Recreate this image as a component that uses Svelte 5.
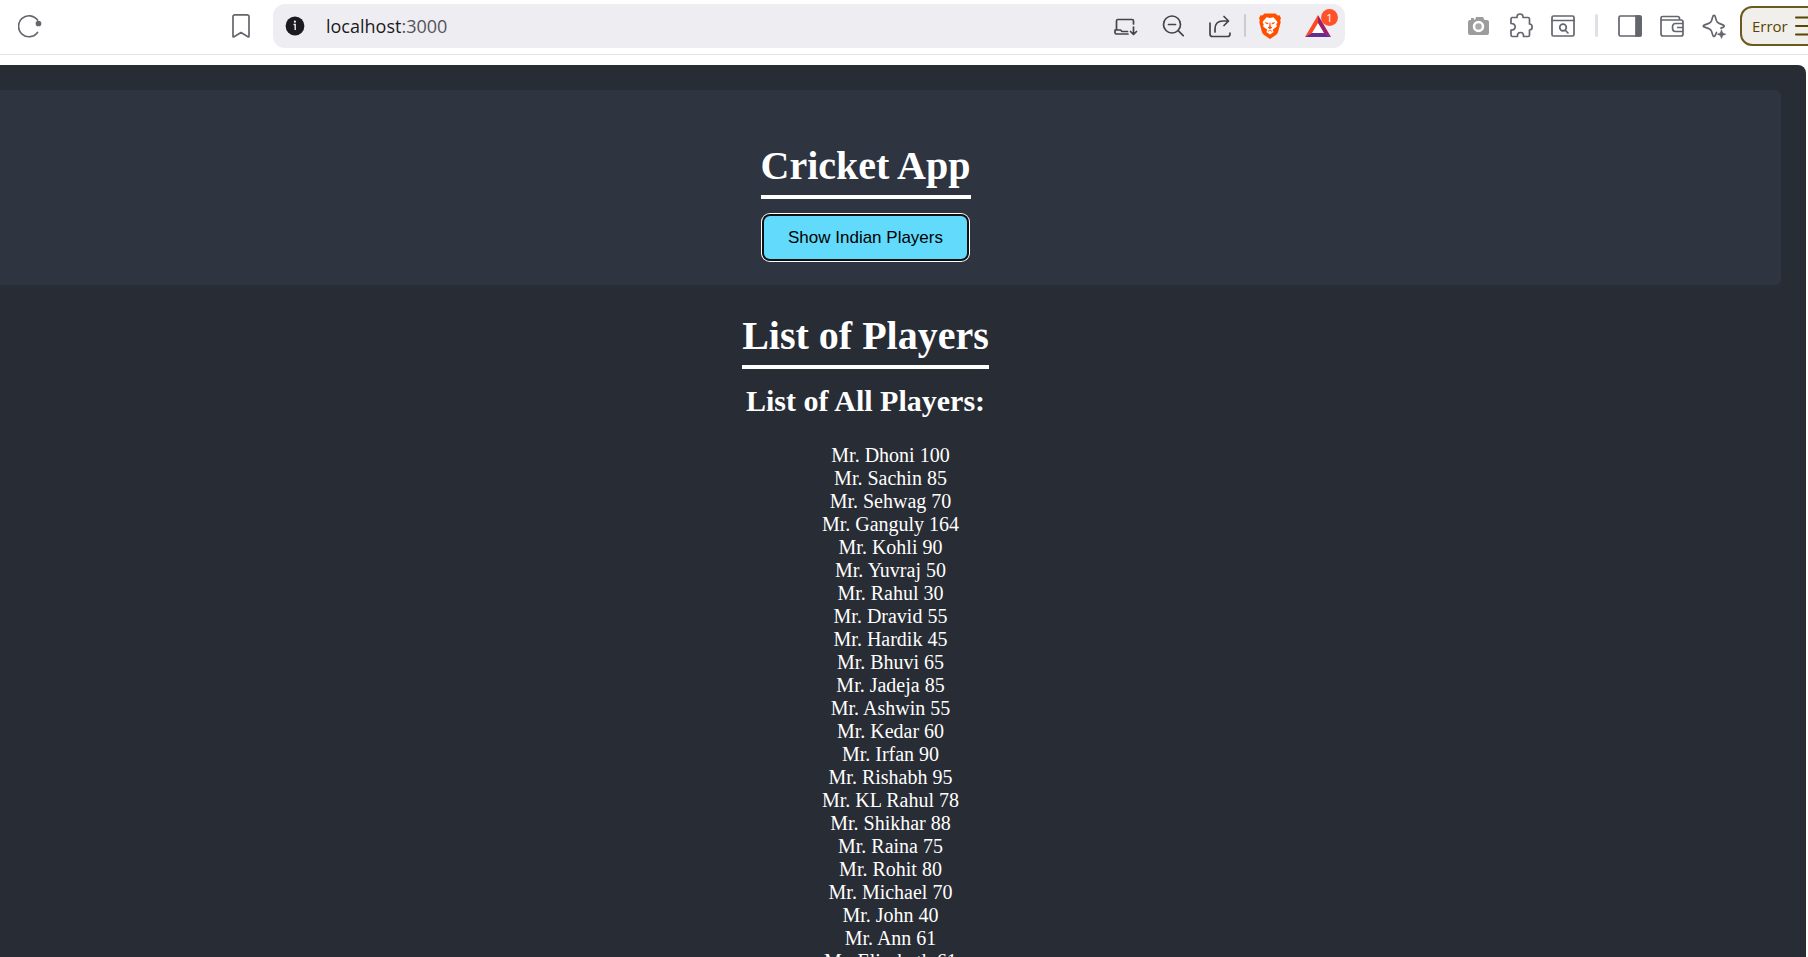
<script>
  const players = [
    ['Dhoni', 100], ['Sachin', 85], ['Sehwag', 70], ['Ganguly', 164], ['Kohli', 90],
    ['Yuvraj', 50], ['Rahul', 30], ['Dravid', 55], ['Hardik', 45], ['Bhuvi', 65],
    ['Jadeja', 85], ['Ashwin', 55], ['Kedar', 60], ['Irfan', 90], ['Rishabh', 95],
    ['KL Rahul', 78], ['Shikhar', 88], ['Raina', 75], ['Rohit', 80], ['Michael', 70],
    ['John', 40], ['Ann', 61], ['Elisabeth', 61]
  ];
</script>

<div class="window">
  <header class="toolbar">
    <button class="icon reload" aria-label="Reload">
      <svg width="24" height="24" viewBox="0 0 24 24" fill="none" stroke="#63666d" stroke-width="1.7" stroke-linecap="round"><path d="M19.500 6A10.500 10.500 0 1 0 19.500 18.500"/><circle cx="20.500" cy="9.500" r="2" fill="#63666d"/></svg>
    </button>
    <button class="icon bookmark" aria-label="Bookmark">
      <svg width="24" height="26" viewBox="0 0 24 26" fill="none" stroke="#63666d" stroke-width="1.7" stroke-linejoin="round"><path d="M5.500 1.800h12.500a2 2 0 0 1 2 2v19.400q0 1.300-1.100.5L12 19.600l-6.900 4.100q-1.100.8-1.100-.5V3.800a2 2 0 0 1 2-2z"/></svg>
    </button>
    <div class="address">
      <svg width="20" height="20" viewBox="0 0 20 20"><circle cx="10" cy="10" r="9.400" fill="#1b1a20"/><path d="M8.500 8.500h1.700v5.500" fill="none" stroke="#eeedf2" stroke-width="1.400"/><circle cx="9.900" cy="5.700" r="1.100" fill="#eeedf2"/></svg>
      <div class="url">localhost<span>:3000</span></div>
      <div class="actions">
        <button class="icon" aria-label="Install app">
          <svg width="24" height="26" viewBox="0 0 24 26" fill="none" stroke="#45444c" stroke-width="1.700" stroke-linecap="round" stroke-linejoin="round"><path d="M2.500 16.500V8q0-1.500 1.500-1.500h14q1.500 0 1.500 1.500v3M1 17h5.500l1.500 1.500h5.500M1 17v2.500q0 1.500 1.500 1.500h11.500M19.500 14v7M16.500 18.500l3 3 3-3"/></svg>
        </button>
        <button class="icon" aria-label="Zoom out">
          <svg width="24" height="26" viewBox="0 0 24 26" fill="none" stroke="#45444c" stroke-width="1.700" stroke-linecap="round"><circle cx="11" cy="11.500" r="8.500"/><path d="M7.500 11.500h7M17.200 17.700l5 5"/></svg>
        </button>
        <button class="icon" aria-label="Share">
          <svg width="24" height="26" viewBox="0 0 24 26" fill="none" stroke="#45444c" stroke-width="1.700" stroke-linecap="round" stroke-linejoin="round"><path d="M2 10v11q0 2.500 2.500 2.500h15q2.500 0 2.500-2.500v-1M7 19v-3q0-8 8-8h5.500M16 3.500l4.500 4.500-4.500 4.500"/></svg>
        </button>
        <i class="divider small"></i>
        <button class="icon" aria-label="Brave Shields">
          <svg width="24" height="26" viewBox="0 0 24 26"><path d="M6.500.5h11l2.200 2 1.800-.2 1.500 3-.8 2 .5 2-2.700 10q-.6 2-2.500 3L12 26l-5.500-3.700q-1.900-1-2.500-3L1.300 9.300l.5-2-.8-2 1.500-3 1.800.2z" fill="#ff5000"/><path d="M8.500 4.300l3.500.7 3.500-.7 4 4.700-1.200 2.500.6 2-4.300 3.200 1 2.300L12 21.500 8.400 19l1-2.300-4.300-3.200.6-2L4.500 9z" fill="#fff"/><path d="M6.800 9l3.400.9.3.7-1 .7q-2-.4-2.700-2.300zM17.200 9l-3.400.9-.3.7 1 .7q2-.4 2.700-2.300zM11.600 9.500h.8l.4 4 1.500 1.200L12 16.200l-2.300-1.500 1.500-1.200z" fill="#ff5000"/><path d="M9.800 18.500l2.200-1.300 2.200 1.300" fill="none" stroke="#ff5000" stroke-width=".8"/></svg>
        </button>
        <button class="icon rewards" aria-label="Brave Rewards, 1 notification">
          <svg width="26" height="24" viewBox="0 0 26 24"><path d="M13 1L0 23l8-4 5-9z" fill="#ff4724"/><path d="M13 1l13 22-8-4-5-9z" fill="#9e1f63"/><path d="M0 23h26l-7-4H7z" fill="#662d91"/><path d="M13 9l6 10H7z" fill="#fff"/></svg>
          <span class="badge">1</span>
        </button>
      </div>
    </div>
    <nav class="tools" aria-label="Browser tools">
      <button class="icon" aria-label="Camera">
        <svg width="24" height="26" viewBox="0 0 24 26"><path d="M3 7h1V5h3v2l1.500-1L9 4h7l1.500 3H20q2 0 2 2v11q0 2-2 2H3q-2 0-2-2V9q0-2 2-2z" fill="#9c9c9c"/><circle cx="11.500" cy="13.500" r="4.500" fill="#aaa" stroke="#fff" stroke-width="2.500"/></svg>
      </button>
      <button class="icon" aria-label="Extensions">
        <svg width="24" height="26" viewBox="1 0 24 26" fill="none" stroke="#63666d" stroke-width="1.700" stroke-linejoin="round"><path d="M4 4.500h5q-.2-3.500 3-3.500t3 3.500h5q1.500 0 1.500 1.500v5q2.600 0 2.600 3t-2.600 3v5q0 1.500-1.500 1.500h-4.500q.2-4-3-4t-3 4H4.500Q3 23.500 3 22v-5q4.200 0 4.200-3.200T3 10.500V6q0-1.500 1.500-1.500z"/></svg>
      </button>
      <button class="icon" aria-label="Page search">
        <svg width="24" height="26" viewBox="0 0 24 26" fill="none" stroke="#63666d" stroke-width="1.700" stroke-linecap="round"><rect x="1" y="3" width="22" height="20" rx="1.500"/><path d="M1 7.500h22M14.500 17.500l2.500 2.500"/><circle cx="12" cy="14.500" r="3.300"/></svg>
      </button>
      <i class="divider"></i>
      <button class="icon" aria-label="Sidebar">
        <svg width="24" height="26" viewBox="0 0 24 26" fill="none" stroke="#63666d" stroke-width="1.700"><rect x="1" y="3" width="22" height="20" rx="1.500"/><path d="M18 3h4q1 0 1 1v18q0 1-1 1h-4z" fill="#63666d"/></svg>
      </button>
      <button class="icon" aria-label="Wallet">
        <svg width="24" height="26" viewBox="0 0 24 26" fill="none" stroke="#63666d" stroke-width="1.700" stroke-linejoin="round"><path d="M19.500 7V5.500q0-2-2-2H2.500Q1 3.500 1 5v15.500Q1 23 3 23h18q2 0 2-2V9q0-2-2-2H1M23 10.500h-7.500q-3 0-3 4t3 4H23M17 14.500h6"/></svg>
      </button>
      <button class="icon" aria-label="Leo AI">
        <svg width="24" height="26" viewBox="0 0 24 26" fill="none" stroke="#63666d" stroke-width="1.700" stroke-linejoin="round" stroke-linecap="round"><path d="M14.500 19.500L13 22.800q-1 1.500-2 0l-1.500-4.500q-.7-2-2.700-2.700l-4.800-1.700q-1.500-.8 0-1.800l4.800-1.700q2-.7 2.700-2.700L11 3q1-1.500 2 0l1.500 4.700q.7 2 2.700 2.700l4.300 1.700q1.500 1 0 2l-2.500 1"/><path d="M19.500 17l1.200 3 3 1.200-3 1.200-1.200 3-1.200-3-3-1.200 3-1.200z" fill="#63666d" stroke-width=".6"/></svg>
      </button>
    </nav>
    <button class="error">Error
      <svg width="24" height="20" viewBox="0 0 24 20" fill="none" stroke="#594400" stroke-width="2" stroke-linecap="round"><path d="M1 1.500h22M1 10h22M1 18.500h22"/></svg>
    </button>
  </header>

  <main class="page">
    <section class="banner">
      <h1>Cricket App</h1>
      <button class="toggle">Show Indian Players</button>
    </section>
    <section class="players">
      <h1>List of Players</h1>
      <h2>List of All Players:</h2>
      <ul>
        {#each players as [name, score]}
          <li>Mr. {name} {score}</li>
        {/each}
      </ul>
    </section>
  </main>
</div>

<style>
  .window {
    height: 100vh;
    display: flex;
    flex-direction: column;
    overflow: hidden;
    background: #fff;
  }
  button {
    font: inherit;
    color: inherit;
  }
  svg {
    display: block;
    flex: none;
  }
  .toolbar {
    flex: none;
    box-sizing: border-box;
    height: 55px;
    padding: 0 0 3px 18px;
    border-bottom: 1px solid #e2e2e4;
    display: flex;
    align-items: center;
    overflow: hidden;
    font-family: "Open Sans", "Noto Sans", sans-serif;
  }
  .icon {
    flex: none;
    padding: 0;
    border: 0;
    background: none;
    position: relative;
  }
  .bookmark {
    margin-left: 187px;
  }
  .address {
    flex: 1;
    box-sizing: border-box;
    height: 44px;
    margin-left: 20px;
    padding: 0 14px 0 12px;
    display: flex;
    align-items: center;
    border-radius: 12px;
    background: #eeedf2;
  }
  .url {
    flex: 1;
    margin-left: 21px;
    font-family: "Open Sans", "Noto Sans", sans-serif;
    font-size: 18px;
    line-height: 26px;
    color: #1b1a20;
  }
  .url span {
    color: #55545c;
  }
  .actions {
    display: flex;
    align-items: center;
    gap: 23px;
  }
  .divider {
    width: 3px;
    height: 23px;
    margin: 0 2px;
    border-radius: 2px;
    background: #e0e1e4;
  }
  .divider.small {
    width: 2px;
    margin: 0 -11px;
    background: #cccbd1;
  }
  .badge {
    position: absolute;
    right: -7px;
    top: -5px;
    width: 17px;
    height: 17px;
    border-radius: 50%;
    background: #ff5228;
    color: #fff;
    font-size: 11px;
    line-height: 17px;
    text-align: center;
  }
  .tools {
    margin-left: 122px;
    display: flex;
    align-items: center;
    gap: 18px;
  }
  .error {
    flex: none;
    box-sizing: border-box;
    width: 90px;
    height: 40px;
    margin: 0 -22px 0 14px;
    padding: 0 0 0 10px;
    display: flex;
    align-items: center;
    gap: 7px;
    border: 2px solid #6b5a1c;
    border-radius: 12px;
    background: #f1efeb;
    color: #594400;
    font-size: 15px;
  }
  .page {
    flex: 1;
    min-height: 0;
    margin: 10px 2px 0 -75px;
    padding: 25px;
    overflow: hidden;
    border-radius: 8px 8px 0 0;
    background: #282c34;
    color: #fff;
    text-align: center;
    font-family: "Liberation Serif", "Times New Roman", serif;
    font-size: 20px;
    line-height: 23px;
  }
  .banner {
    padding: 53px 25px 26px;
    border-radius: 6px;
    background: #2e3440;
  }
  h1 {
    width: fit-content;
    margin: 0 auto;
    padding-bottom: 7px;
    border-bottom: 4px solid #fff;
    font-size: 40px;
    line-height: 45px;
  }
  .toggle {
    display: block;
    margin: 17px auto 0;
    padding: 12px 24px;
    border: 0;
    border-radius: 6px;
    background: #61dafb;
    color: #000;
    font-family: "Liberation Sans", Arial, sans-serif;
    font-size: 17px;
    line-height: 19px;
    box-shadow: 0 0 0 2px #101010, 0 0 0 3px #fff;
  }
  .players {
    padding-top: 28px;
  }
  h2 {
    margin: 15px 0 26px;
    font-size: 30px;
    line-height: 34px;
  }
  ul {
    margin: 0;
    padding: 0 0 0 50px;
    list-style: none;
  }
</style>
